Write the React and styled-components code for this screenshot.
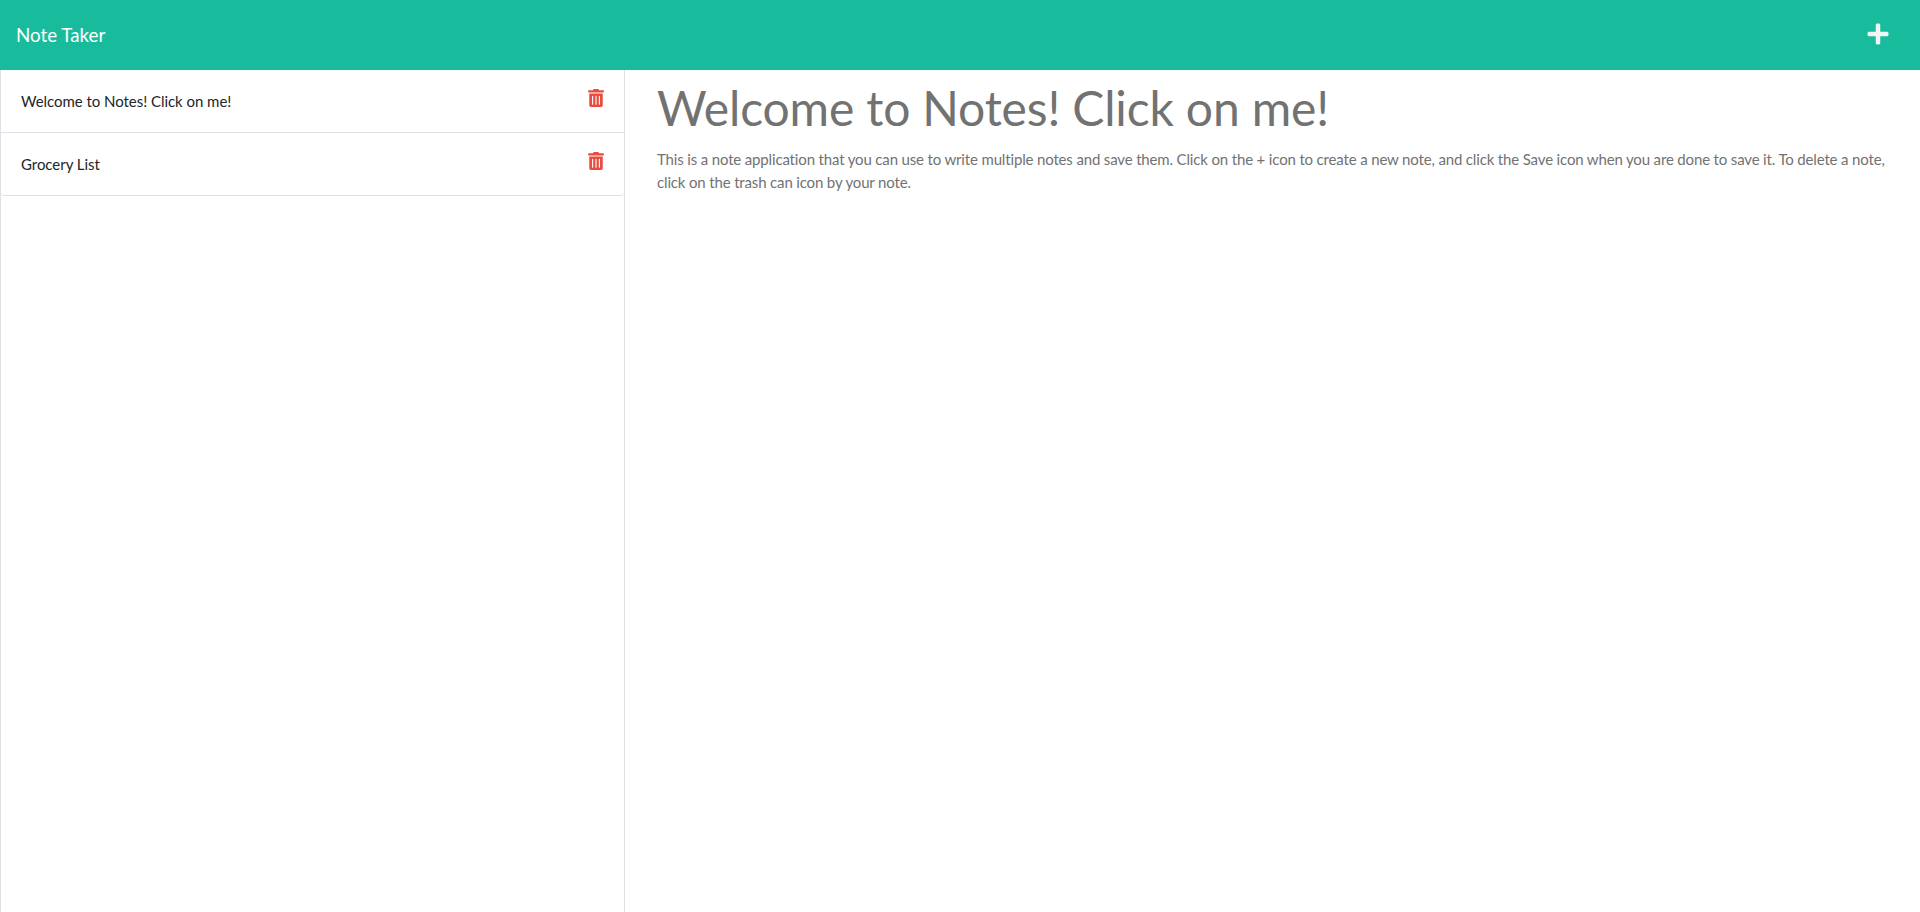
import React from "react";
import styled, { createGlobalStyle } from "styled-components";
import { FaPlus, FaTrashAlt } from "react-icons/fa";

const notes = [
  { id: 1, title: "Welcome to Notes! Click on me!" },
  { id: 2, title: "Grocery List" },
];

const GlobalStyle = createGlobalStyle`
  * {
    box-sizing: border-box;
  }

  html,
  body {
    margin: 0;
    height: 100%;
    background: #fff;
    font-family: Lato, "Liberation Sans", sans-serif;
    font-size: 15px;
    line-height: 22.5px;
    color: #212529;
  }
`;

export default function App() {
  return (
    <Page>
      <GlobalStyle />

      <Navbar>
        <Brand>Note Taker</Brand>
        <NewNoteButton aria-label="New note">
          <FaPlus />
        </NewNoteButton>
      </Navbar>

      <Main>
        {/* note list */}
        <Sidebar>
          <NoteList>
            {notes.map((note) => (
              <NoteItem key={note.id}>
                <NoteTitle>{note.title}</NoteTitle>
                <DeleteIcon />
              </NoteItem>
            ))}
          </NoteList>
        </Sidebar>

        {/* selected note */}
        <Content>
          <Title>Welcome to Notes! Click on me!</Title>
          <Body>
            This is a note application that you can use to write multiple notes
            and save them. Click on the + icon to create a new note, and click
            the Save icon when you are done to save it. To delete a note, click
            on the trash can icon by your note.
          </Body>
        </Content>
      </Main>
    </Page>
  );
}

const Page = styled.div`
  display: flex;
  flex-direction: column;
  height: 912px;
  overflow: hidden;
`;

const Navbar = styled.nav`
  display: flex;
  flex: 0 0 70px;
  align-items: center;
  justify-content: space-between;
  padding: 0 30px 0 16px;
  background: #18bc9c;
`;

const Brand = styled.a`
  color: #fff;
  font-size: 18.75px;
  line-height: 28px;
`;

const NewNoteButton = styled.span`
  display: flex;
  margin-bottom: 3px;
  color: #f2f4f4;
  font-size: 24px;
`;

const Main = styled.main`
  display: flex;
  flex: 1;
  min-height: 0;
`;

const Sidebar = styled.aside`
  flex: 0 0 625px;
  border-left: 1px solid #dee2e6;
  border-right: 1px solid #dee2e6;
`;

const NoteList = styled.ul`
  margin: 0;
  padding: 0;
  list-style: none;
`;

const NoteItem = styled.li`
  display: flex;
  align-items: flex-start;
  justify-content: space-between;
  height: 63px;
  padding: 20px 19px 0 20px;
  border-bottom: 1px solid #dee2e6;

  &:last-child {
    border-bottom-right-radius: 4px;
    border-bottom-left-radius: 4px;
  }
`;

const NoteTitle = styled.span`
  color: #212529;
  letter-spacing: -0.04px;
`;

const DeleteIcon = styled(FaTrashAlt)`
  margin-top: -1px;
  color: #e74c3c;
  font-size: 18px;
`;

const Content = styled.section`
  flex: 1;
  min-width: 0;
  padding: 0 30px 0 32px;
`;

const Title = styled.h1`
  margin: 7px 0 9px;
  color: #727272;
  font-size: 48px;
  font-weight: 400;
  line-height: 62px;
  letter-spacing: -0.16px;
`;

const Body = styled.p`
  margin: 0;
  color: #727272;
  letter-spacing: -0.155px;
`;
